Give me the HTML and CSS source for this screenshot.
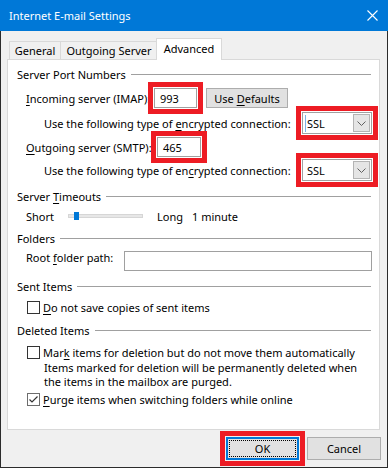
FILE: index.html
```html
<!DOCTYPE html>
<html lang="en">
<head>
  <meta charset="UTF-8">
  <title>Internet E-mail Settings</title>
  <link rel="stylesheet" href="styles.css">
</head>
<body>

<div class="window">
  <div class="titlebar">
    <span class="title">Internet E-mail Settings</span>
    <svg class="close" width="11" height="11" viewBox="0 0 11 11">
      <path d="M0.5 0.5 L10.5 10.5 M10.5 0.5 L0.5 10.5" stroke="#fff" stroke-width="1.1" fill="none"/>
    </svg>
  </div>

  <div class="client">
    <div class="tabs">
      <div class="tab tab-general">General</div>
      <div class="tab tab-outgoing">Outgoing Server</div>
      <div class="tab tab-advanced active">Advanced</div>
    </div>

    <div class="panel">
      <div class="group-title first"><span>Server Port Numbers</span></div>

      <div class="row row-imap">
        <span class="port-label in"><u>I</u>ncoming server (IMAP):</span>
        <span class="textbox port in marked">993</span>
        <span class="button defaults"><span>Use <u>D</u>efaults</span></span>
      </div>

      <div class="row row-enc first-enc">
        <span>Use the following type of <u>e</u>ncrypted connection:</span>
        <span class="combo marked">
          <span class="caret"></span><span>SSL</span>
          <span class="drop"><svg width="9" height="5" viewBox="0 0 9 5"><path d="M0.5 0.5 L4.5 4.5 L8.5 0.5" stroke="#606060" fill="none"/></svg></span>
        </span>
      </div>

      <div class="row row-smtp">
        <span class="port-label out"><u>O</u>utgoing server (SMTP):</span>
        <span class="textbox port out marked">465</span>
      </div>

      <div class="row row-enc second-enc">
        <span>Use the following type of en<u>c</u>rypted connection:</span>
        <span class="combo marked">
          <span>SSL</span>
          <span class="drop"><svg width="9" height="5" viewBox="0 0 9 5"><path d="M0.5 0.5 L4.5 4.5 L8.5 0.5" stroke="#606060" fill="none"/></svg></span>
        </span>
      </div>

      <div class="group-title timeouts"><span>Server <u>T</u>imeouts</span></div>
      <div class="row row-slider">
        <span class="slider-label">Short</span>
        <span class="slider"><span class="thumb"></span></span>
        <span class="slider-long">Long</span>
        <span>1 minute</span>
      </div>

      <div class="group-title folders"><span>Folders</span></div>
      <div class="row row-root">
        <span>Root <u>f</u>older path:</span>
        <span class="textbox root"></span>
      </div>

      <div class="group-title sent"><span>Sent Items</span></div>
      <div class="row row-check nosave">
        <span class="check"></span>
        <span><u>D</u>o not save copies of sent items</span>
      </div>

      <div class="group-title deleted"><span>Deleted Items</span></div>
      <div class="row row-check mark">
        <span class="check"></span>
        <span>Mar<u>k</u> items for deletion but do not move them automatically</span>
      </div>
      <div class="note">
        Items marked for deletion will be permanently deleted when<br>
        the items in the mailbox are purged.
      </div>
      <div class="row row-check purge">
        <span class="check checked">
          <svg width="11" height="11" viewBox="0 0 11 11"><path d="M1.5 5.5 L4 8 L9.5 2.5" stroke="#333" stroke-width="1.2" fill="none"/></svg>
        </span>
        <span><u>P</u>urge items when switching folders while online</span>
      </div>
    </div>

    <div class="footer">
      <div class="button btn-ok marked"><span class="focus">OK</span></div>
      <div class="button btn-cancel">Cancel</div>
    </div>
  </div>
</div>

</body>
</html>
```

FILE: styles.css
```css
body {
  margin: 0;
  font-family: "Noto Sans", "Open Sans", sans-serif;
  font-size: 11px;
  color: #000;
}

u {
  text-decoration-thickness: 1px;
  text-underline-offset: 2px;
}

.window {
  width: 388px;
  height: 468px;
  display: flex;
  flex-direction: column;
  background: #f0f0f0;
}

/* title bar */
.titlebar {
  flex: none;
  height: 31px;
  display: flex;
  align-items: center;
  padding: 0 10px 0 9px;
  background: #0078d7;
  color: #fff;
}

.title {
  flex: 1;
}

.close {
  display: block;
}

.client {
  flex: 1;
  border: 1px solid #2b2b2b;
  border-top: none;
  padding: 7px 7px 0 6px;
}

/* tabs */
.tabs {
  display: flex;
  align-items: flex-end;
  height: 22px;
  margin-bottom: -1px;
  padding-left: 2px;
  position: relative;
  z-index: 1;
}

.tab {
  box-sizing: border-box;
  height: 18px;
  margin-bottom: 1px;
  display: flex;
  align-items: center;
  justify-content: center;
  border: 1px solid #d9d9d9;
  border-bottom: none;
  background: #f0f0f0;
}

.tab-general {
  width: 52px;
}

.tab-outgoing {
  width: 98px;
  margin-left: -1px;
}

.tab.active {
  width: 66px;
  height: 22px;
  margin-bottom: 0;
  margin-left: -2px;
  padding-bottom: 2px;
  background: #fff;
}

/* panel */
.panel {
  box-sizing: border-box;
  width: 373px;
  height: 371px;
  padding: 6px 7px 0 9px;
  border: 1px solid #d9d9d9;
  background: #fff;
}

.group-title {
  display: flex;
  align-items: center;
  height: 16px;
}

.group-title::after {
  content: "";
  flex: 1;
  margin: 0 1px 0 5px;
  border-top: 1px solid #a0a0a0;
}

.group-title.timeouts { margin-top: 7px; }
.group-title.folders { margin-top: 6px; }
.group-title.sent { margin-top: 7px; }
.group-title.deleted { margin-top: 7px; }

.row {
  display: flex;
  align-items: center;
  padding-left: 9px;
}

.row-imap {
  height: 20px;
  margin-top: 6px;
}

.row-smtp {
  height: 20px;
  margin-top: 3px;
}

.row-enc {
  height: 22px;
  padding-left: 27px;
}

.first-enc { margin-top: 4px; }
.second-enc { margin-top: 2px; }

.port-label.in { width: 128px; }
.port-label.out { width: 131px; }

.textbox {
  box-sizing: border-box;
  height: 20px;
  display: flex;
  align-items: center;
  padding-left: 5px;
  border: 1px solid #a0a0a0;
  background: #fff;
}

.port.in { width: 43px; }
.port.out { width: 44px; }

.marked {
  outline: 5px solid #ed1c24;
  outline-offset: 1px;
}

.button {
  box-sizing: border-box;
  display: flex;
  align-items: center;
  justify-content: center;
  border: 1px solid #adadad;
  background: #e1e1e1;
}

.defaults {
  width: 82px;
  height: 20px;
  margin-left: 9px;
  align-self: flex-end;
}

.combo {
  box-sizing: border-box;
  width: 70px;
  height: 22px;
  margin-left: auto;
  display: flex;
  align-items: center;
  padding: 1px 1px 1px 4px;
  border: 1px solid #a0a0a0;
  background: #fff;
}

.caret {
  width: 1px;
  height: 17px;
  margin: 0 1px 0 -2px;
  background: #7ab4e8;
}

.drop {
  box-sizing: border-box;
  width: 17px;
  height: 18px;
  margin-left: auto;
  display: flex;
  align-items: center;
  justify-content: center;
  border: 1px solid #b4b4b4;
  background: #e5e5e5;
}

/* timeouts */
.row-slider {
  height: 16px;
  margin-top: 4px;
}

.slider-label {
  width: 42px;
}

.slider {
  position: relative;
  box-sizing: border-box;
  width: 75px;
  height: 4px;
  margin-right: 14px;
  border: 1px solid #d6d6d6;
  background: #e7e7e7;
}

.thumb {
  position: absolute;
  left: 5px;
  top: -3px;
  width: 5px;
  height: 8px;
  background: #0078d7;
}

.slider-long {
  width: 35px;
}

/* folders */
.row-root {
  height: 21px;
  margin-top: 4px;
  align-items: flex-start;
  line-height: 16px;
}

.textbox.root {
  width: 248px;
  margin-left: auto;
  margin-top: 1px;
}

/* checkboxes */
.row-check {
  height: 16px;
  padding-left: 10px;
}

.nosave { margin-top: 5px; }
.mark { margin-top: 6px; }
.purge { margin-top: 2px; }

.check {
  flex: none;
  box-sizing: border-box;
  width: 13px;
  height: 13px;
  margin-right: 3px;
  display: flex;
  align-items: center;
  justify-content: center;
  border: 1px solid #333;
  background: #fff;
}

.check.checked {
  border-color: #6d6d6d;
}

.note {
  margin-top: 1px;
  padding-left: 27px;
  line-height: 14px;
}

/* buttons */
.footer {
  display: flex;
  justify-content: flex-end;
  gap: 8px;
  padding-top: 7px;
  margin-right: -1px;
}

.btn-ok {
  width: 73px;
  height: 23px;
  padding: 1px;
  border: 2px solid #0078d7;
}

.btn-ok .focus {
  align-self: stretch;
  flex: 1;
  display: flex;
  align-items: center;
  justify-content: center;
  border: 1px dotted #000;
}

.btn-cancel {
  width: 74px;
  height: 23px;
}
```
